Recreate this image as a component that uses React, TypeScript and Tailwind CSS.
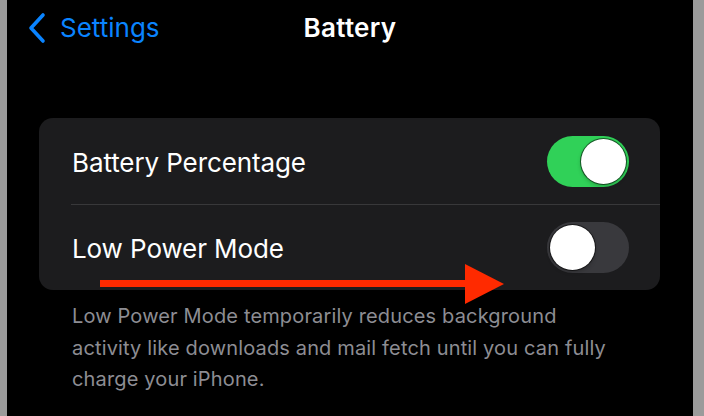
import type { ReactNode } from 'react';

type ToggleProps = {
  on: boolean;
};

function Toggle({ on }: ToggleProps) {
  return (
    <div
      className={`flex h-[51px] w-[82px] items-center rounded-full p-[3px] ${
        on ? 'justify-end bg-[#30d158]' : 'justify-start bg-[#39393d]'
      }`}
    >
      <div className="h-[45px] w-[45px] rounded-full bg-white shadow-[0_0_0_1px_rgba(0,0,0,0.55),0_2px_4px_rgba(0,0,0,0.25)]" />
    </div>
  );
}

type RowProps = {
  label: string;
  children: ReactNode;
  divider?: boolean;
};

function Row({ label, children, divider }: RowProps) {
  return (
    <div className="pl-[32px]">
      <div
        className={`flex h-[86px] items-center justify-between pl-[1px] pr-[31px] ${
          divider ? 'border-t border-[#38383a]' : ''
        }`}
      >
        <span className="pt-[2px] text-[26px] tracking-[-0.1px] text-white">{label}</span>
        {children}
      </div>
    </div>
  );
}

function BackChevron() {
  return (
    <svg width="20" height="32" viewBox="0 0 20 32" fill="none">
      <path
        d="M16 3 L4 16 L16 29"
        stroke="#0a84ff"
        strokeWidth="3.6"
        strokeLinecap="round"
        strokeLinejoin="round"
      />
    </svg>
  );
}

export default function App() {
  return (
    <div className="flex h-[416px] w-[704px] bg-[#9b9b9b] pl-[7px] pr-[11px] font-['Inter',sans-serif]">
      <div className="relative flex-1 overflow-hidden bg-black">
        <header className="grid h-[54px] grid-cols-[1fr_auto_1fr] items-center">
          <div className="flex items-center gap-[13px] pl-[20px] pt-[1px]">
            <BackChevron />
            <span className="text-[26px] text-[#0a84ff]">Settings</span>
          </div>
          <h1 className="text-[26px] font-semibold tracking-[0.3px] text-white">Battery</h1>
          <div />
        </header>

        <section className="ml-[32px] mr-[33px] mt-[64px] rounded-[14px] bg-[#1c1c1e]">
          <Row label="Battery Percentage">
            <Toggle on />
          </Row>
          <Row label="Low Power Mode" divider>
            <Toggle on={false} />
          </Row>
        </section>

        <p className="ml-[65px] mt-[11px] w-[545px] text-[20px] leading-[31.5px] tracking-[0.15px] text-[#8d8d93]">
          Low Power Mode temporarily reduces background activity like downloads and mail fetch until you can fully
          charge your iPhone.
        </p>

        {/* red annotation arrow pointing at the Low Power Mode switch */}
        <svg className="pointer-events-none absolute left-0 top-0" width="686" height="416" viewBox="0 0 686 416">
          <rect x="93" y="280" width="366" height="7" fill="#ff2a00" />
          <polygon points="458,264 497,284 458,304" fill="#ff2a00" />
        </svg>
      </div>
    </div>
  );
}
